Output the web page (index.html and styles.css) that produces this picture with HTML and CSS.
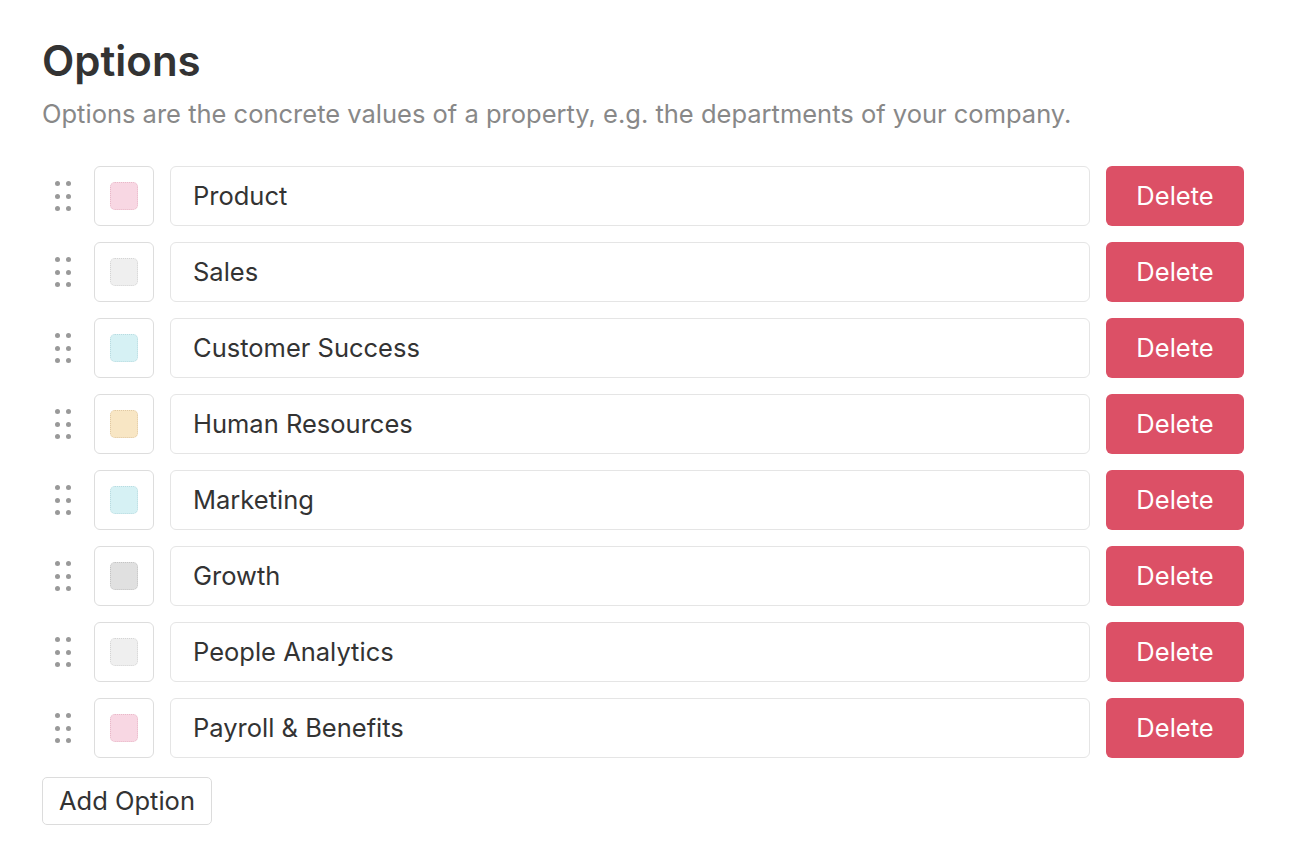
FILE: index.html
```html
<!DOCTYPE html>
<html>
<head>
<meta charset="utf-8">
<link rel="stylesheet" href="styles.css">
</head>
<body>
<div class="page">
  <h1 class="title">Options</h1>
  <p class="subtitle">Options are the concrete values of a property, e.g. the departments of your company.</p>
  <div class="list">
    <div class="row"><div class="handle"><span></span><span></span><span></span><span></span><span></span><span></span></div><div class="swatch-box"><div class="swatch pink"></div></div><div class="field">Product</div><button class="delete">Delete</button></div>
    <div class="row"><div class="handle"><span></span><span></span><span></span><span></span><span></span><span></span></div><div class="swatch-box"><div class="swatch light"></div></div><div class="field">Sales</div><button class="delete">Delete</button></div>
    <div class="row"><div class="handle"><span></span><span></span><span></span><span></span><span></span><span></span></div><div class="swatch-box"><div class="swatch cyan"></div></div><div class="field">Customer Success</div><button class="delete">Delete</button></div>
    <div class="row"><div class="handle"><span></span><span></span><span></span><span></span><span></span><span></span></div><div class="swatch-box"><div class="swatch yellow"></div></div><div class="field">Human Resources</div><button class="delete">Delete</button></div>
    <div class="row"><div class="handle"><span></span><span></span><span></span><span></span><span></span><span></span></div><div class="swatch-box"><div class="swatch cyan"></div></div><div class="field">Marketing</div><button class="delete">Delete</button></div>
    <div class="row"><div class="handle"><span></span><span></span><span></span><span></span><span></span><span></span></div><div class="swatch-box"><div class="swatch gray"></div></div><div class="field">Growth</div><button class="delete">Delete</button></div>
    <div class="row"><div class="handle"><span></span><span></span><span></span><span></span><span></span><span></span></div><div class="swatch-box"><div class="swatch light"></div></div><div class="field">People Analytics</div><button class="delete">Delete</button></div>
    <div class="row"><div class="handle"><span></span><span></span><span></span><span></span><span></span><span></span></div><div class="swatch-box"><div class="swatch pink"></div></div><div class="field">Payroll &amp; Benefits</div><button class="delete">Delete</button></div>
  </div>
  <button class="add">Add Option</button>
</div>
</body>
</html>
```
FILE: styles.css
```css
* { box-sizing: border-box; }
html, body { margin: 0; padding: 0; background: #fff; }
body { font-family: "Inter", "Liberation Sans", Arial, sans-serif; color: #333; }
.page { padding: 36px 50px 0 42px; }
.title { margin: 0; font-size: 42px; font-weight: 600; line-height: 50px; color: #333; letter-spacing: 0; }
.subtitle { margin: 14px 0 0; font-size: 25.5px; line-height: 28px; color: #888; }
.list { margin-top: 38px; display: flex; flex-direction: column; gap: 16px; }
.row { display: flex; align-items: center; height: 60px; }
.handle { width: 42px; margin-right: 10px; display: grid; grid-template-columns: 5px 5px; column-gap: 6px; row-gap: 7.5px; justify-content: center; }
.handle span { width: 5px; height: 5px; border-radius: 50%; background: #999; }
.swatch-box { width: 60px; height: 60px; border: 1px solid #ddd; border-radius: 6px; display: flex; align-items: center; justify-content: center; margin-right: 16px; }
.swatch { width: 28px; height: 28px; border-radius: 5px; border: 1px dotted #c9c9c9; }
.pink { background: #f8d7e3; border-color: #e8b9c9; }
.light { background: #efefef; border-color: #d4d4d4; }
.cyan { background: #d6f1f4; border-color: #b9dbe0; }
.yellow { background: #f8e6c4; border-color: #e0c9a4; }
.gray { background: #e0e0e0; border-color: #c4c4c4; }
.field { flex: 1; height: 60px; border: 1px solid #e5e5e5; border-radius: 6px; padding: 0 0 2px 22px; display: flex; align-items: center; font-size: 25.5px; color: #333; margin-right: 16px; }
.delete { width: 138px; height: 60px; border: none; border-radius: 6px; background: #dc5066; color: #fff; font-family: inherit; font-size: 25.5px; padding: 0 0 2px; }
.add { margin-top: 19px; height: 48px; padding: 0 16px 2px; border: 1px solid #dcdcdc; border-radius: 5px; background: #fff; font-family: inherit; font-size: 25.5px; color: #333; }
```
